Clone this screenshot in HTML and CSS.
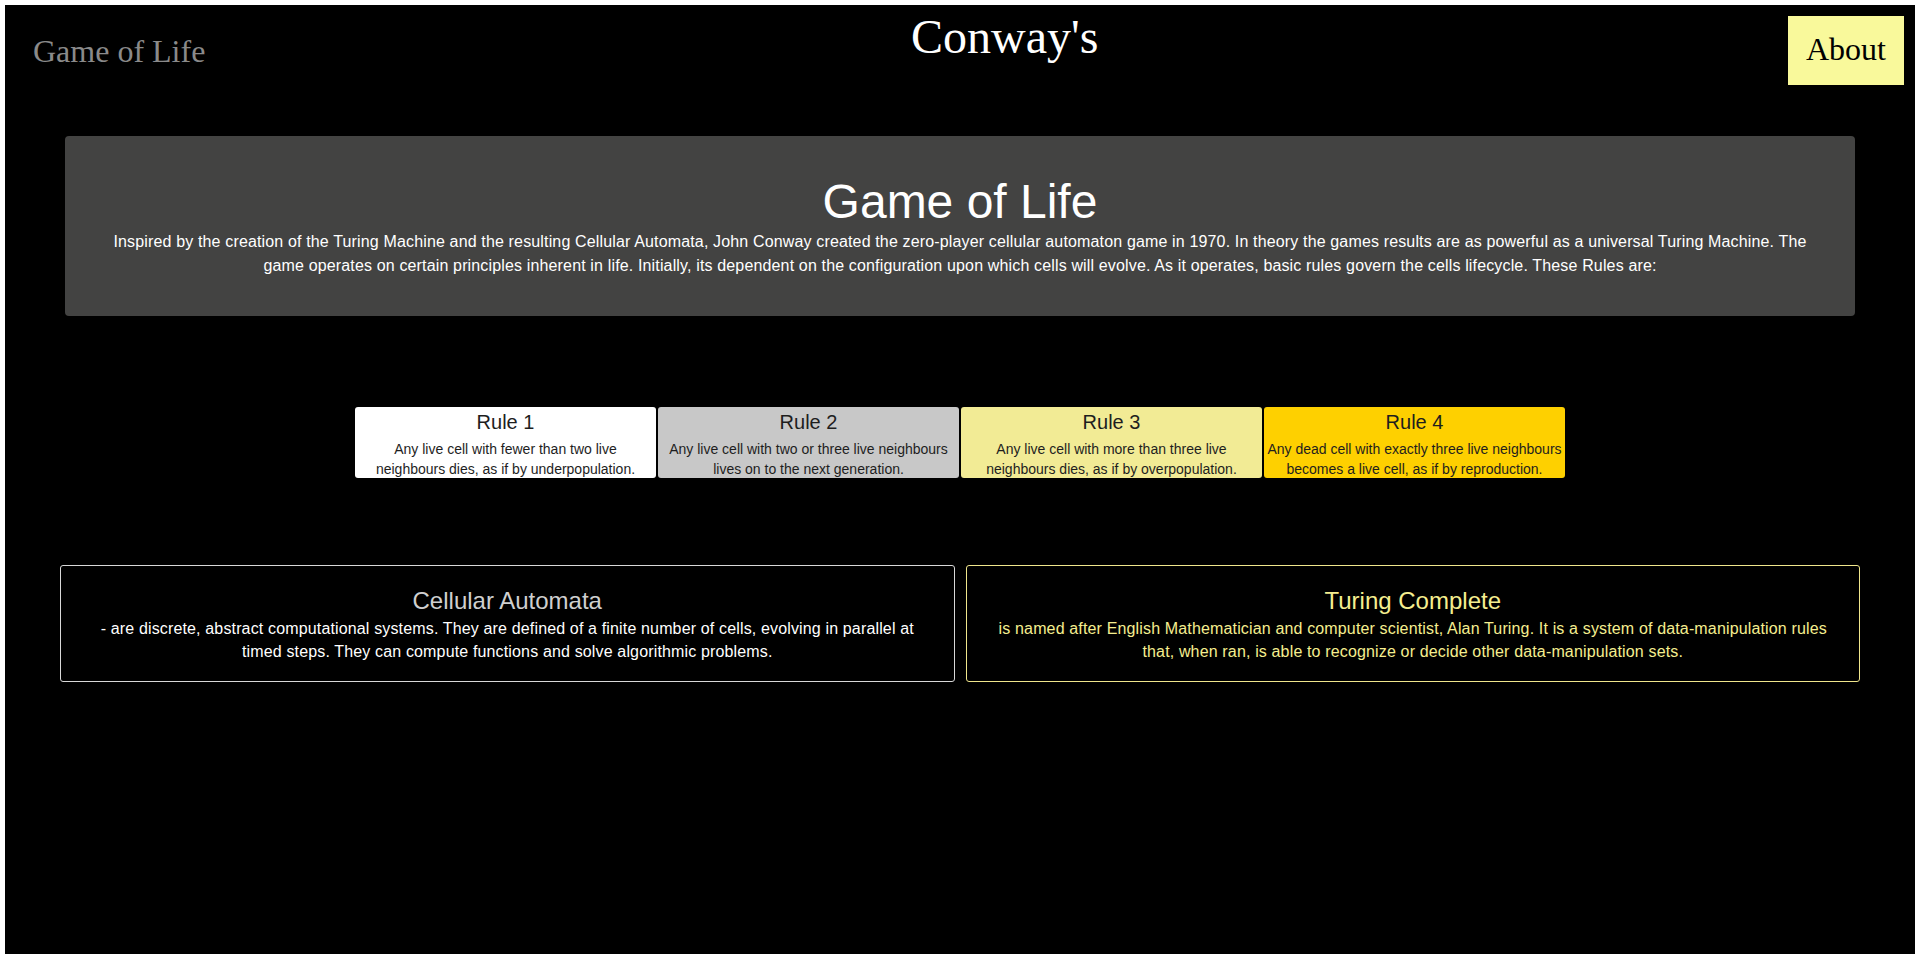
FILE: index.html
```html
<!DOCTYPE html>
<html lang="en">
<head>
<meta charset="utf-8">
<title>Conway's Game of Life</title>
<link rel="stylesheet" href="styles.css">
</head>
<body>
<main class="page">
  <header class="topbar">
    <div class="brand">Game of Life</div>
    <div class="title">Conway's</div>
    <button class="about">About</button>
  </header>

  <section class="intro">
    <h1 class="intro-title">Game of Life</h1>
    <p class="intro-text">Inspired by the creation of the Turing Machine and the resulting Cellular Automata, John Conway created the zero-player cellular automaton game in 1970. In theory the games results are as powerful as a universal Turing Machine. The game operates on certain principles inherent in life. Initially, its dependent on the configuration upon which cells will evolve. As it operates, basic rules govern the cells lifecycle. These Rules are:</p>
  </section>

  <section class="rules">
    <div class="rule rule-1">
      <h3 class="rule-title">Rule 1</h3>
      <p class="rule-text">Any live cell with fewer than two live neighbours dies, as if by underpopulation.</p>
    </div>
    <div class="rule rule-2">
      <h3 class="rule-title">Rule 2</h3>
      <p class="rule-text">Any live cell with two or three live neighbours lives on to the next generation.</p>
    </div>
    <div class="rule rule-3">
      <h3 class="rule-title">Rule 3</h3>
      <p class="rule-text">Any live cell with more than three live neighbours dies, as if by overpopulation.</p>
    </div>
    <div class="rule rule-4">
      <h3 class="rule-title">Rule 4</h3>
      <p class="rule-text">Any dead cell with exactly three live neighbours becomes a live cell, as if by reproduction.</p>
    </div>
  </section>

  <section class="concepts">
    <div class="concept concept-ca">
      <h2 class="concept-title">Cellular Automata</h2>
      <p class="concept-text">- are discrete, abstract computational systems. They are defined of a finite number of cells, evolving in parallel at timed steps. They can compute functions and solve algorithmic problems.</p>
    </div>
    <div class="concept concept-tc">
      <h2 class="concept-title">Turing Complete</h2>
      <p class="concept-text">is named after English Mathematician and computer scientist, Alan Turing. It is a system of data-manipulation rules that, when ran, is able to recognize or decide other data-manipulation sets.</p>
    </div>
  </section>
</main>
</body>
</html>
```

FILE: styles.css
```css
html, body {
  background: #ffffff;
}

body {
  margin: 5px 4px 0 5px;
  font-family: "Liberation Sans", Arial, sans-serif;
}

.page {
  background: #000000;
  height: 949px;
  display: flex;
  flex-direction: column;
  overflow: hidden;
}

/* Header */
.topbar {
  display: flex;
  justify-content: space-between;
  align-items: flex-start;
  height: 80px;
  padding: 0 11px 0 28px;
  font-family: "Liberation Serif", "Times New Roman", serif;
}

.brand {
  margin-top: 28px;
  font-size: 32px;
  line-height: 37px;
  color: #8a8a8a;
}

.title {
  margin-top: 4px;
  margin-left: 16px;
  font-size: 48px;
  line-height: 55px;
  color: #ffffff;
}

.about {
  margin-top: 11px;
  padding: 15px 18px 17px;
  border: 0;
  border-radius: 0;
  background: #f9f99b;
  color: #000000;
  font-family: "Liberation Serif", "Times New Roman", serif;
  font-size: 32px;
  line-height: 37px;
}

/* Intro */
.intro {
  margin: 51px 60px 0;
  padding: 37px 40px 38px;
  background: #434342;
  border-radius: 4px;
  text-align: center;
  color: #ffffff;
}

.intro-title {
  margin: 0;
  font-size: 48px;
  line-height: 57px;
  font-weight: normal;
}

.intro-text {
  margin: 0;
  font-size: 16px;
  line-height: 24px;
  letter-spacing: 0.15px;
}

/* Rules */
.rules {
  display: flex;
  justify-content: center;
  gap: 2px;
  margin-top: 91px;
}

.rule {
  width: 301px;
  height: 71px;
  box-sizing: border-box;
  padding: 3px 3px 0;
  border-radius: 3px;
  text-align: center;
  color: #1e1e1e;
  overflow: hidden;
}

.rule-1 { background: #ffffff; }
.rule-2 { background: #c8c8c8; }
.rule-3 { background: #f2eb95; }
.rule-4 { background: #fed000; }

.rule-title {
  margin: 0 0 5px;
  font-size: 20px;
  line-height: 24px;
  font-weight: normal;
}

.rule-text {
  margin: 0 -3px;
  padding: 0 3px;
  font-size: 14px;
  line-height: 20px;
}

/* Concepts */
.concepts {
  display: grid;
  grid-template-columns: 1fr 1fr;
  gap: 11px;
  margin: 87px 55px 0;
}

.concept {
  height: 117px;
  box-sizing: border-box;
  padding: 21px 30px 0;
  border: 1px solid #d8d8d8;
  border-radius: 3px;
  text-align: center;
}

.concept-title {
  margin: 0;
  font-size: 24px;
  line-height: 28px;
  font-weight: normal;
}

.concept-text {
  margin: 2px 0 0;
  font-size: 16px;
  line-height: 23px;
  letter-spacing: 0.15px;
}

.concept-ca .concept-title { color: #cfcfcf; }
.concept-ca .concept-text { color: #ffffff; }

.concept-tc { border-color: #f0e68c; }
.concept-tc .concept-title,
.concept-tc .concept-text { color: #f5ee8f; }
```
